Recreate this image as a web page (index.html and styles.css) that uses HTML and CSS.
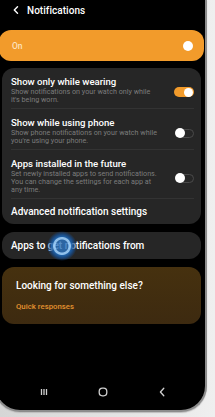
FILE: index.html
```html
<!DOCTYPE html>
<html>
<head>
<meta charset="utf-8">
<link rel="stylesheet" href="styles.css">
</head>
<body>
<div class="phone">
  <header class="top">
    <svg class="back" width="6" height="8" viewBox="0 0 6 8"><path d="M4.5 0.8 L1.3 4 L4.5 7.2" fill="none" stroke="#fff" stroke-width="1.4" stroke-linecap="round" stroke-linejoin="round"/></svg>
    <span class="top-title">Notifications</span>
  </header>

  <div class="master">
    <span class="master-label">On</span>
    <span class="dot"></span>
  </div>

  <div class="card list">
    <div class="item">
      <div class="item-text">
        <div class="title">Show only while wearing</div>
        <div class="sub">Show notifications on your watch only while<br>it's being worn.</div>
      </div>
      <span class="switch on"></span>
    </div>
    <div class="item">
      <div class="item-text">
        <div class="title">Show while using phone</div>
        <div class="sub">Show phone notifications on your watch while<br>you're using your phone.</div>
      </div>
      <span class="switch"></span>
    </div>
    <div class="item">
      <div class="item-text">
        <div class="title">Apps installed in the future</div>
        <div class="sub">Set newly installed apps to send notifications.<br>You can change the settings for each app at<br>any time.</div>
      </div>
      <span class="switch"></span>
    </div>
    <div class="item link">Advanced notification settings</div>
  </div>

  <div class="card single">
    <span>Apps to get notifications from</span>
    <span class="touch"></span>
  </div>

  <div class="card promo">
    <div class="promo-title">Looking for something else?</div>
    <div class="promo-link">Quick responses</div>
  </div>

  <nav class="navbar">
    <svg class="nav-ic" width="8" height="8" viewBox="0 0 8 8"><path d="M1.5 1 V7 M4 1 V7 M6.5 1 V7" stroke="#cfcfcf" stroke-width="1.3"/></svg>
    <svg class="nav-ic" width="10" height="10" viewBox="0 0 10 10"><rect x="1.2" y="1.2" width="7.6" height="7.6" rx="3.2" fill="none" stroke="#cfcfcf" stroke-width="1.3"/></svg>
    <svg class="nav-ic" width="8" height="10" viewBox="0 0 8 10"><path d="M5.8 1.2 L2.4 5 L5.8 8.8" fill="none" stroke="#cfcfcf" stroke-width="1.3" stroke-linecap="round" stroke-linejoin="round"/></svg>
  </nav>
</div>
</body>
</html>
```

FILE: styles.css
```css
html, body {
  margin: 0;
  padding: 0;
}
body {
  width: 215px;
  height: 417px;
  overflow: hidden;
  background: linear-gradient(90deg, #d6d6d6 0, #efefef 100%);
  font-family: Roboto, "Liberation Sans", sans-serif;
  color: #fff;
}
.phone {
  box-sizing: border-box;
  margin-left: -6px;
  width: 213px;
  height: 412px;
  background: #000;
  border: 2px solid #8c8c8c;
  border-top: 0;
  border-radius: 0 0 26px 26px;
  padding: 0 4px 0 6px;
  display: flex;
  flex-direction: column;
  box-shadow: 0 1px 1px #bdbdbd;
}
.top {
  height: 20px;
  display: flex;
  align-items: center;
  padding-left: 11px;
  gap: 8px;
  margin-bottom: 10px;
}
.back { display: block; }
.top-title {
  font-size: 10px;
  font-weight: 500;
  letter-spacing: 0.05px;
}
.master {
  height: 31px;
  margin: 0 -3px;
  border-radius: 12px;
  background: #f29b2b;
  display: flex;
  align-items: center;
  justify-content: space-between;
  padding: 0 11px 0 13px;
}
.master-label {
  font-size: 8.5px;
  font-weight: 500;
  color: #fde2bd;
}
.dot {
  width: 10px;
  height: 10px;
  border-radius: 50%;
  background: #fff;
}
.card {
  border-radius: 12px;
  background: #262626;
}
.list {
  margin-top: 7px;
  padding: 0 7px 0 9px;
}
.item {
  display: flex;
  align-items: center;
  justify-content: space-between;
  padding: 8px 0 4px;
  border-bottom: 1px solid #333;
}
.title {
  font-size: 9.6px;
  font-weight: 500;
  line-height: 12px;
  white-space: nowrap;
}
.sub {
  font-size: 7.2px;
  line-height: 8px;
  color: #7c7c7c;
  white-space: nowrap;
}
.switch {
  position: relative;
  width: 18px;
  height: 9px;
  border-radius: 5px;
  border: 1px solid #4a4a4a;
  box-sizing: border-box;
  margin-top: 4px;
}
.switch::after {
  content: "";
  position: absolute;
  left: -2px;
  top: -1.5px;
  width: 10px;
  height: 10px;
  border-radius: 50%;
  background: #fff;
}
.switch.on {
  width: 20px;
  height: 10px;
  border: 0;
  background: #f29b2b;
}
.switch.on::after {
  left: auto;
  right: 1px;
  top: 0.5px;
  width: 9px;
  height: 9px;
}
.item.link {
  border-bottom: 0;
  height: 25px;
  padding: 0;
  font-size: 10px;
  font-weight: 500;
}
.single {
  position: relative;
  margin-top: 8px;
  height: 27px;
  display: flex;
  align-items: center;
  padding-left: 9px;
  font-size: 10px;
  font-weight: 500;
}
.touch {
  position: absolute;
  left: 45px;
  top: -1px;
  width: 30px;
  height: 30px;
  border-radius: 50%;
  background: radial-gradient(circle, rgba(45,115,190,0.82) 0 6px, rgba(150,200,245,0.95) 7px 8.5px, rgba(30,100,175,0.92) 9.5px, rgba(22,80,150,0.7) 12px, rgba(22,80,150,0) 15px);
}
.promo {
  margin-top: 8px;
  height: 57px;
  background: linear-gradient(180deg, #46310f, #3d2a10);
  padding: 13px 0 0 14px;
  box-sizing: border-box;
}
.promo-title {
  font-size: 10px;
  font-weight: 500;
  line-height: 12px;
}
.promo-link {
  margin-top: 10px;
  font-size: 7.8px;
  font-weight: 500;
  line-height: 10px;
  color: #e3922f;
}
.navbar {
  margin-top: auto;
  height: 36px;
  display: grid;
  grid-template-columns: repeat(3, 59px);
  justify-items: center;
  align-items: center;
  padding-left: 12px;
}
.nav-ic { display: block; }
```
